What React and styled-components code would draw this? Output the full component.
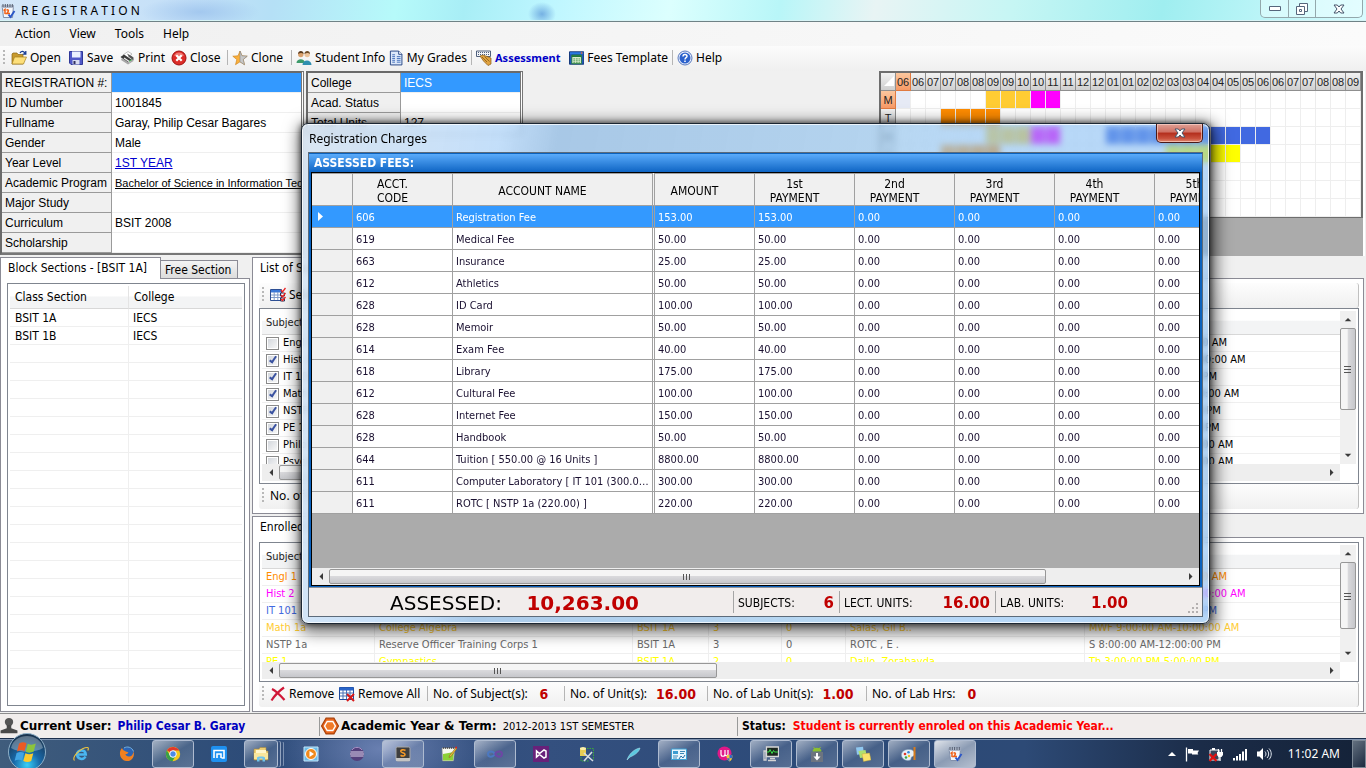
import React from "react";
import styled, { createGlobalStyle, css } from "styled-components";

const TAHOMA = `Tahoma, "DejaVu Sans Condensed", "DejaVu Sans", sans-serif`;
const SEGOE = `"Segoe UI", "Noto Sans", "Open Sans", sans-serif`;
const VERDANA = `Verdana, "DejaVu Sans", sans-serif`;
const ARIAL = `Arial, "Liberation Sans", sans-serif`;

const Global = createGlobalStyle`
  *, *::before, *::after { box-sizing: border-box; }
  body { margin: 0; background: #f0f0f0; color: #000; font-family: ${SEGOE}; font-size: 12px; }
  button { font: inherit; color: inherit; padding: 0; margin: 0; border: 0; background: none; }
  table { border-collapse: separate; border-spacing: 0; }
  th { font-weight: normal; text-align: left; }
`;

const Desktop = styled.div`
  position: relative;
  display: flex;
  flex-direction: column;
  height: 100vh;
  min-height: 680px;
  overflow: hidden;
`;

/* ---------- window title, menu, toolbar ---------- */

const TitleBar = styled.header`
  display: flex;
  flex: none;
  justify-content: space-between;
  height: 22px;
  padding-right: 3px;
  border-bottom: 1px solid #6f8286;
  box-shadow: inset 0 -1px 0 #d8f4f6;
  background:
    radial-gradient(ellipse 60px 16px at 200px 12px, rgba(150, 190, 235, 0.7), transparent),
    radial-gradient(ellipse 14px 12px at 542px 14px, rgba(100, 160, 220, 0.8), transparent),
    linear-gradient(100deg, #d4e6f8 0%, #c4e0f8 14%, #b5e0f6 20%, #b6fafa 29%, #a8eef6 34%, #bdf6ff 40%, #dcfffe 49%, #b8f6f8 57%, #e8f4f4 64%, #c6f6f4 74%, #9feef0 85%, #d8fcff 100%);
`;

const AppName = styled.h1`
  display: flex;
  align-items: center;
  gap: 5px;
  margin: 0;
  font-size: 12px;
  font-weight: normal;
  white-space: pre;
`;

const WindowButtons = styled.div`
  display: flex;
  height: 18px;
  border: 1px solid #93a8ac;
  border-top: 0;
  border-radius: 0 0 5px 5px;
  background: rgba(240, 255, 255, 0.5);
`;

const WindowButton = styled.button`
  display: flex;
  align-items: center;
  justify-content: center;
  width: ${(p) => (p.$wide ? 47 : 27)}px;
  & + & { border-left: 1px solid #93a8ac; }
`;

const MenuBar = styled.nav`
  display: flex;
  flex: none;
  align-items: center;
  gap: 19px;
  height: 24px;
  padding-left: 15px;
  background: linear-gradient(90deg, #f0f0f0, #fbfbfb);
`;

const MenuItem = styled.button`
  line-height: 20px;
`;

const Toolbar = styled.div`
  display: flex;
  flex: none;
  align-items: center;
  height: 25px;
  padding: 0 0 2px 3px;
  background: linear-gradient(#fcfcfc, #efefef);
`;

const Grip = styled.span`
  width: 2px;
  height: 16px;
  margin-right: 6px;
  background: repeating-linear-gradient(#b8b8b8 0 2px, transparent 2px 4px);
`;

const Divider = styled.span`
  width: 1px;
  height: ${(p) => p.$h || 15}px;
  margin: 0 ${(p) => p.$gap || 4}px;
  background: #b5b5b5;
`;

const ToolButton = styled.button`
  display: flex;
  align-items: center;
  gap: 3px;
  width: ${(p) => p.$w}px;
  white-space: nowrap;
  ${(p) => p.$active && css`color: #0000c8; font-weight: bold; font-size: 11px;`}
`;

/* ---------- student data ---------- */

const InfoArea = styled.section`
  display: flex;
  flex: none;
  align-items: flex-start;
  gap: 2px;
  height: 186px;
`;

const InfoTable = styled.table`
  flex: none;
  table-layout: fixed;
  width: ${(p) => p.$w}px;
  border: 2px solid #777;
  border-left-color: #6a6a6a;
  border-top-color: #6a6a6a;
  border-right: 3px double #777;
  background: #fff;
  font-family: ${ARIAL};
  font-size: 12px;
  th, td { height: 20px; padding: 0 3px; overflow: hidden; white-space: nowrap; line-height: 18px; }
  th { width: ${(p) => p.$label}px; background: #f0f0f0; border-right: 1px solid #9a9a9a; border-bottom: 1px solid #9a9a9a; }
  td { border-bottom: 1px solid #efefef; }
`;

const SelectedValue = styled.td`
  background: #3399ff;
  color: #fff;
`;

const InfoLink = styled.a`
  color: ${(p) => (p.$plain ? "#000" : "#0000d0")};
  font-size: ${(p) => (p.$plain ? 11 : 12)}px;
`;

const ScheduleBox = styled.div`
  flex: none;
  width: 486px;
  height: 185px;
  margin-left: auto;
  margin-right: 1px;
  border-right: 2px solid #fff;
  background: #ababab;
`;

const ScheduleTable = styled.table`
  table-layout: fixed;
  width: 484px;
  border: 2px solid #6e6e6e;
  border-bottom-width: 1px;
  background: #fff;
  font-family: ${ARIAL};
  font-size: 11px;
  th { height: 18px; padding: 0; text-align: center; white-space: nowrap; color: #222; background: linear-gradient(#f2f2f2, #cfcfcf); border-right: 1px solid #8f8f8f; border-bottom: 1px solid #8f8f8f; }
  td { height: 18px; padding: 0; border-right: 1px solid #eee; border-bottom: 1px solid #eee; }
`;

const MarkedHead = styled.th`
  && { background: linear-gradient(#fbc79e, #f79a66); border-color: #e07a40; }
`;

const Slot = styled.td`
  background: ${(p) => p.$color || "transparent"};
`;

/* ---------- panels ---------- */

const Main = styled.main`
  display: flex;
  flex: 1;
  gap: 2px;
  min-height: 0;
  padding-right: 2px;
`;

const SideColumn = styled.section`
  display: flex;
  flex: none;
  flex-direction: column;
  width: 250px;
`;

const WorkColumn = styled.div`
  display: flex;
  flex: 1;
  flex-direction: column;
  gap: 2px;
  min-width: 0;
`;

const TabbedPanel = styled.section`
  display: flex;
  flex-direction: column;
  flex: ${(p) => (p.$grow ? "1" : "0 0 257px")};
  min-height: 0;
`;

const Tabs = styled.div`
  display: flex;
  flex: none;
  align-items: flex-end;
  height: 21px;
`;

const Tab = styled.button`
  position: relative;
  z-index: 1;
  height: ${(p) => (p.$active ? 22 : 18)}px;
  margin-bottom: ${(p) => (p.$active ? -1 : 0)}px;
  width: ${(p) => p.$w}px;
  padding: 0 0 ${(p) => (p.$active ? 2 : 0)}px ${(p) => (p.$active ? 7 : 4)}px;
  border: 1px solid #8b8b95;
  border-bottom: 0;
  background: ${(p) => (p.$active ? "#fff" : "linear-gradient(#f4f4f4, #dcdcdc)")};
  text-align: left;
  white-space: nowrap;
  font-family: ${TAHOMA};
  font-size: 12px;
  & + & { border-left: 0; }
`;

const PanelBody = styled.div`
  display: flex;
  flex: 1;
  flex-direction: column;
  min-height: 0;
  padding: ${(p) => p.$pad || "4px 4px 5px 6px"};
  border: 1px solid #8b8b95;
  background: #fff;
`;

const ListBox = styled.div`
  display: flex;
  flex: 1;
  min-height: 0;
  padding: 2px;
  border: 1px solid #7f858f;
  background: #fff;
`;

const ListPane = styled.div`
  display: flex;
  flex: 1;
  flex-direction: column;
  min-width: 0;
`;

const ListClip = styled.div`
  flex: 1;
  min-height: 0;
  overflow: hidden;
  ${(p) => p.$ruled && css`
    background:
      linear-gradient(90deg, transparent 118px, #efefef 118px 119px, transparent 119px 232px, #efefef 232px 233px, transparent 233px),
      repeating-linear-gradient(transparent 0 17px, #efefef 17px 18px);
    background-position: 0 0, 0 23px;
  `}
`;

const SectionTable = styled.table`
  table-layout: fixed;
  width: 233px;
  font-family: ${TAHOMA};
  font-size: 12px;
  th { height: 23px; padding: 0 5px; border-bottom: 1px solid #d8d8d8; background: linear-gradient(#fff 45%, #f3f4f5 50%); }
  th + th { border-left: 1px solid #e4e4e4; }
  td { height: 18px; padding: 1px 5px 0; line-height: 17px; }
`;

const SubjectTable = styled.table`
  table-layout: fixed;
  width: 100%;
  font-family: ${TAHOMA};
  font-size: 11px;
  th { height: 24px; padding: 0 4px; border-bottom: 1px solid #d8d8d8; background: linear-gradient(#fff 40%, #f3f4f5 45%); color: #222; }
  td { height: 17px; padding: 0 4px; border-bottom: 1px solid #efefef; line-height: 16px; white-space: nowrap; }
  td + td { border-left: 1px solid #efefef; }
`;

const SubjectRow = styled.tr`
  color: ${(p) => p.$color || "#000"};
`;

const CheckLabel = styled.label`
  display: flex;
  align-items: center;
  gap: 4px;
`;

const Check = styled.input`
  appearance: none;
  position: relative;
  width: 13px;
  height: 13px;
  margin: 0;
  border: 1px solid #8a8a8a;
  background: linear-gradient(135deg, #d0d4da, #fafafa);
  box-shadow: inset 0 0 0 1px #fff;
  &:checked::before {
    content: "";
    position: absolute;
    left: 4px;
    top: 0;
    width: 4px;
    height: 8px;
    border: solid #3a52a0;
    border-width: 0 2px 2px 0;
    transform: rotate(35deg);
  }
`;

const PanelBar = styled.div`
  display: flex;
  align-items: center;
  height: 25px;
  flex: none;
  padding: 0 0 2px 3px;
  border-right: 1px solid #c0c0c0;
  border-radius: 3px;
  background: linear-gradient(#fdfdfd, #f0f0f0);
  white-space: nowrap;
`;

const Figure = styled.span`
  display: inline-block;
  width: ${(p) => p.$w}px;
  text-align: center;
  color: #c00000;
  font-family: ${TAHOMA};
  font-size: 14px;
  font-weight: bold;
`;

const BarText = styled.span`
  width: ${(p) => p.$w}px;
`;

/* ---------- scrollbars ---------- */

const HTrack = styled.div`
  display: flex;
  align-items: center;
  height: 17px;
  flex: none;
  background: #eee;
`;

const VTrack = styled.div`
  display: flex;
  flex-direction: column;
  align-items: center;
  width: 16px;
  flex: none;
  margin-bottom: 17px;
  background: #f0f0f0;
`;

const ArrowButton = styled.button`
  display: flex;
  flex: none;
  align-items: center;
  justify-content: center;
  width: 17px;
  height: 17px;
`;

const Rail = styled.div`
  flex: 1;
  min-height: 0;
  min-width: 0;
  align-self: stretch;
`;

const Thumb = styled.div`
  display: flex;
  align-items: center;
  justify-content: center;
  width: ${(p) => (p.$vertical ? "100%" : `${p.$size}%`)};
  height: ${(p) => (p.$vertical ? `${p.$size}%` : "15px")};
  margin: ${(p) => (p.$vertical ? "0" : "1px 0")};
  border: 1px solid #979797;
  border-radius: 2px;
  background: linear-gradient(${(p) => (p.$vertical ? "90deg" : "180deg")}, #f5f5f5 0 45%, #d9d9dc 50%, #c6c7cb);
  color: #444;
`;

const Chevron = ({ turn }) => (
  <svg width="4" height="7" viewBox="0 0 4 7" style={{ rotate: `${turn}deg` }} aria-hidden="true">
    <path d="M4 0v7L.5 3.500z" fill="#3a3a3a" />
  </svg>
);

const GripMarks = ({ vertical }) => (
  <svg width="8" height="8" viewBox="0 0 8 8" stroke="#555" aria-hidden="true">
    {vertical ? <path d="M0 1.500h7M0 4.500h7M0 7.500h7" /> : <path d="M.5 1v6M3.500 1v6M6.500 1v6" />}
  </svg>
);

const HScroll = ({ size }) => (
  <HTrack>
    <ArrowButton aria-label="Scroll left"><Chevron turn={0} /></ArrowButton>
    <Rail><Thumb $size={size}><GripMarks /></Thumb></Rail>
    <ArrowButton aria-label="Scroll right"><Chevron turn={180} /></ArrowButton>
  </HTrack>
);

const VScroll = ({ size }) => (
  <VTrack>
    <ArrowButton aria-label="Scroll up"><Chevron turn={90} /></ArrowButton>
    <Rail><Thumb $vertical $size={size}><GripMarks vertical /></Thumb></Rail>
    <ArrowButton aria-label="Scroll down"><Chevron turn={270} /></ArrowButton>
  </VTrack>
);

/* ---------- charges dialog ---------- */

const Dialog = styled.section`
  position: absolute;
  z-index: 5;
  top: 123px;
  left: 301px;
  right: 156px;
  padding: 0 6px 6px;
  border: 1px solid #1c2733;
  border-radius: 7px;
  background: linear-gradient(100deg, rgba(214, 228, 242, 0.85) 0, rgba(190, 220, 250, 0.9) 20%, rgba(150, 190, 228, 0.8) 26%, rgba(160, 202, 238, 0.75) 60%, rgba(125, 184, 242, 0.55) 75%);
  backdrop-filter: blur(3px);
  box-shadow: inset 0 0 0 1px rgba(255, 255, 255, 0.75), 0 0 6px rgba(0, 0, 0, 0.7), 2px 4px 16px 4px rgba(0, 0, 0, 0.6);
`;

const DialogTitle = styled.header`
  display: flex;
  align-items: center;
  justify-content: space-between;
  height: 28px;
`;

const DialogName = styled.h2`
  margin: 0;
  font-size: 12px;
  font-weight: normal;
  padding-left: 1px;
`;

const DialogClose = styled.button`
  display: flex;
  align-items: center;
  justify-content: center;
  align-self: flex-start;
  width: 47px;
  height: 19px;
  border: 1px solid #4a1a18;
  border-top: 0;
  border-radius: 0 0 5px 5px;
  background: linear-gradient(#dfa196 0, #cf6f62 45%, #b32d1c 50%, #c9503c 80%, #e08a72);
  box-shadow: inset 0 0 0 1px rgba(255, 220, 210, 0.6);
`;

const DialogBody = styled.div`
  border: 1px solid #5d6b7a;
  background: #f0ecec;
`;

const FeesPanel = styled.div`
  padding: 1px 2px;
  background: #0b62bd;
`;

const FeesCaption = styled.h3`
  height: 18px;
  margin: 0 -2px;
  padding-left: 5px;
  background: linear-gradient(#5aabfb, #0f65c4);
  color: #fff;
  font-family: ${TAHOMA};
  font-size: 12px;
  font-weight: bold;
  line-height: 19px;
`;

const FeesGrid = styled.div`
  border: 1px solid #000;
  background: #ababab;
`;

const FeesClip = styled.div`
  height: 395px;
  overflow: hidden;
`;

const FeesTable = styled.table`
  table-layout: fixed;
  width: 1043px;
  font-family: ${TAHOMA};
  font-size: 11px;
  th { height: 33px; padding: 3px 0 0; border-right: 1px solid #a0a0a0; border-bottom: 1px solid #a0a0a0; background: #f0f0f0; text-align: center; font-size: 12px; line-height: 14px; box-shadow: inset 0 1px 0 #a0a0a0; }
  td { height: 22px; padding: 1px 3px 0; border-right: 1px solid #a0a0a0; border-bottom: 1px solid #a0a0a0; background: #fff; color: #1a1030; overflow: hidden; text-overflow: ellipsis; white-space: nowrap; }
  th:first-child, td:first-child { background: #f0f0f0; }
  th:nth-child(3), td:nth-child(3) { border-right: 3px double #a0a0a0; }
`;

const FeeRow = styled.tr`
  ${(p) => p.$selected && css`
    && td { background: #3399ff; color: #fff; }
  `}
`;

const HeadText = styled.span`
  display: block;
  padding-right: 20px;
`;

const Totals = styled.footer`
  display: flex;
  align-items: center;
  height: 29px;
  border-top: 1px solid #8d9299;
  background: #f1edec;
  font-family: ${TAHOMA};
  font-size: 12px;
`;

const Total = styled.div`
  display: flex;
  flex: none;
  align-items: center;
  justify-content: space-between;
  width: ${(p) => p.$w}px;
  height: 22px;
  padding: 1px ${(p) => p.$end || 5}px 0 ${(p) => p.$start || 4}px;
  border-right: ${(p) => (p.$last ? 0 : "1px solid #a5a5a5")};
  white-space: nowrap;
  font-size: ${(p) => (p.$large ? 20 : 12)}px;
  font-family: ${(p) => (p.$large ? VERDANA : TAHOMA)};
`;

const Amount = styled.strong`
  color: #c00000;
  font-family: ${VERDANA};
  font-size: ${(p) => (p.$large ? 20 : 15)}px;
`;

const SizeGrip = styled.svg`
  align-self: flex-end;
  margin: 0 3px 2px auto;
`;

/* ---------- status bar and taskbar ---------- */

const StatusBar = styled.footer`
  display: flex;
  flex: none;
  align-items: center;
  height: 25px;
  margin-top: 1px;
  border-top: 1px solid #8d8d8d;
  background: #f1edec;
  font-family: ${VERDANA};
  font-size: 12px;
`;

const StatusCell = styled.div`
  display: flex;
  align-items: center;
  width: ${(p) => (p.$w ? `${p.$w}px` : "auto")};
  height: 19px;
  gap: 2px;
  padding-left: ${(p) => p.$start || 0}px;
  white-space: nowrap;
  & + & { border-left: 1px solid #999; }
`;

const StatusLabel = styled.b`
  font-family: ${(p) => (p.$tight ? TAHOMA : VERDANA)};
  margin-right: ${(p) => (p.$tight ? 5 : 4)}px;
`;

const StatusValue = styled.span`
  color: ${(p) => p.$color};
  font-family: ${TAHOMA};
  font-size: ${(p) => (p.$bold ? 12 : 11)}px;
  font-weight: ${(p) => (p.$bold ? "bold" : "normal")};
`;

const Taskbar = styled.nav`
  position: relative;
  display: flex;
  flex: none;
  align-items: center;
  height: 30px;
  padding-left: 58px;
  border-top: 1px solid #1c2f4c;
  box-shadow: inset 0 1px 0 #7f93b0;
  background:
    radial-gradient(ellipse 110px 60px at 380px 10px, rgba(120, 140, 190, 0.8), transparent),
    linear-gradient(90deg, #3f5c7c 0, #2b4a78 20%, #34507f 40%, #2c4a78 60%, #2d4a76 75%, #1b2c48 88%, #142238);
`;

const StartButton = styled.button`
  position: absolute;
  left: 7px;
  top: -7px;
  width: 40px;
  height: 37px;
  overflow: hidden;
`;

const TaskButton = styled.button`
  display: flex;
  flex: none;
  align-items: center;
  justify-content: center;
  width: ${(p) => (p.$stacked ? 34 : 42)}px;
  height: 28px;
  margin: 0 ${(p) => (p.$stacked ? 10 : 2)}px 0 2px;
  border-radius: 3px;
  ${(p) => p.$open && css`
    border: 1px solid #aebbd0;
    background: linear-gradient(150deg, rgba(255, 255, 255, 0.55), rgba(255, 255, 255, 0.12) 50%, rgba(255, 255, 255, 0.2));
  `}
  ${(p) => p.$front && css`
    background: linear-gradient(150deg, rgba(255, 255, 255, 0.85), rgba(255, 255, 255, 0.45) 50%, rgba(255, 255, 255, 0.65));
  `}
  ${(p) => p.$stacked && css`
    box-shadow: 3px 0 0 -1px #35507c, 4px 0 0 -1px #93a5c0, 7px 0 0 -2px #35507c, 8px 0 0 -2px #7d92b2;
  `}
`;

const Tray = styled.div`
  display: flex;
  align-items: center;
  gap: 8px;
  margin-left: auto;
  height: 28px;
  color: #fff;
`;

const Clock = styled.time`
  margin: 0 4px 0 8px;
  font-size: 12px;
`;

const ShowDesktop = styled.button`
  width: 14px;
  height: 28px;
  border: 1px solid #7b8794;
  background: linear-gradient(135deg, #63707f, #1c2a40);
`;

/* ---------- icons ---------- */

const Svg = ({ s = 16, box = 16, children }) => (
  <svg width={s} height={s} viewBox={`0 0 ${box} ${box}`} fill="none" aria-hidden="true">{children}</svg>
);

const art = {
  calendar: (
    <>
      <path d="M2 2.500h11.500l-1 12H3.500z" fill="#f4f6fb" stroke="#8290aa" />
      <path d="M2 2h11.500v3H2z" fill="#aeb8ca" />
      <path d="M3 1v3M5.300 1v3M7.600 1v3M10 1v3M12.300 1v3" stroke="#555e70" />
      <path d="M3.500 7.500l1.500-1V11M6.500 7.200c2.500-1.200 2.600 1 .2 3.300H10" stroke="#f06018" strokeWidth="1.500" />
      <path d="M8.500 11.500l2 2.500 4-6" stroke="#2a55c8" strokeWidth="1.900" />
    </>
  ),
  open: (
    <>
      <path d="M1 4l1-1h4l1 1.500h5V14H1z" fill="#c89a2c" stroke="#8a6616" strokeWidth=".7" />
      <path d="M3.500 7H15.500L12.500 14H1z" fill="#fddf7a" stroke="#a5801f" strokeWidth=".7" />
      <path d="M9 3c1.500-2.500 4-2 5 .5M14.800 1v3.200h-3" stroke="#173c94" strokeWidth="1.300" />
    </>
  ),
  save: (
    <>
      <path d="M1.500 1.500h13v13h-11.500l-1.500-1.500z" fill="#5058c8" stroke="#303898" />
      <path d="M4 1.500h8.500v6H4z" fill="#eaf0ff" />
      <path d="M4.500 10h7v4.500h-7z" fill="#d8dcf0" />
      <path d="M5.500 11h2v3h-2z" fill="#303060" />
    </>
  ),
  print: (
    <>
      <path d="M4 5l5-3.500 4 2.500-5 4z" fill="#fff" stroke="#999" strokeWidth=".6" />
      <path d="M1.500 7L5 4.500l8 5.500-3.500 3.500z" fill="#3a3a3a" />
      <path d="M2 10l7 4.500 5.500-3.500-1.500-2-4 3-6-4z" fill="#a8a8a8" />
      <path d="M8 3.500L12.500 6l2 1.500v3L10 7z" fill="#555" />
      <path d="M5 8l6 4" stroke="#eee" strokeWidth="1.300" />
      <path d="M10 11.500l3-2" stroke="#39b54a" strokeWidth=".8" />
    </>
  ),
  close: (
    <>
      <circle cx="8" cy="8" r="7" fill="#dc2c28" stroke="#a01010" />
      <path d="M3 5.500C5 1.500 11 1.500 13 5.500c-3 1.500-7 1.500-10 0z" fill="#f58c84" opacity=".8" />
      <path d="M5.300 5.300l5.400 5.400M10.700 5.300l-5.400 5.400" stroke="#fff" strokeWidth="2.200" />
    </>
  ),
  star: (
    <>
      <path d="M8 1l2 4.800 5.200.4-4 3.300 1.300 5.200L8 11.800l-4.500 2.900 1.300-5.200-4-3.300L6 5.800z" fill="#fbb03b" stroke="#c87d18" strokeWidth=".6" />
      <path d="M8 1l2 4.800 5.200.4-4 3.300 1.300 5.200L8 11.800z" fill="#c8c8c8" stroke="#888" strokeWidth=".6" />
    </>
  ),
  people: (
    <>
      <circle cx="4.800" cy="4.500" r="2.700" fill="#d9a06c" />
      <path d="M2 4c0-4 5.800-4 5.600 0-2-1.500-3.500-1-5.600 0z" fill="#5a3a1c" />
      <path d="M.5 13c0-5 8.500-5 8.500 0z" fill="#3e9b6b" />
      <circle cx="11.200" cy="4.500" r="2.700" fill="#ecc39a" />
      <path d="M8.400 4c0-4 5.800-4 5.600 0-2-1.500-3.500-1-5.600 0z" fill="#6e4a24" />
      <path d="M6.500 15c0-6 9-6 9 0z" fill="#2f8fb0" />
    </>
  ),
  grades: (
    <>
      <path d="M1.500 .5h9l3.500 3.500v11.500h-12.500z" fill="#dce8fa" stroke="#1e3f80" />
      <path d="M10.500.5V4H14" stroke="#1e3f80" fill="#fff" />
      <path d="M3.500 4.500h3M3.500 6.500h3M3.500 8.500h3M3.500 10.500h3M3.500 12.500h3M8.500 6.500h4M8.500 8.500h4M8.500 10.500h4M8.500 12.500h4" stroke="#3f6bb8" />
    </>
  ),
  assess: (
    <>
      <path d="M.5 1h14v5.500H.5z" fill="#f2f4f8" stroke="#50607c" />
      <path d="M2 2.500h11M2 4.500h11" stroke="#50607c" strokeDasharray="1 1" />
      <path d="M4 6l3-1 8 3v6l-3 1.500L7.500 11z" fill="#e0a340" stroke="#8a5a14" strokeWidth=".7" />
      <path d="M6 7l5 5M8.500 6.500l5 5" stroke="#8a5a14" strokeWidth=".8" />
    </>
  ),
  fees: (
    <>
      <path d="M.5 1.500h15v13H.5z" fill="#1f58b8" stroke="#0e3276" />
      <path d="M1 2h14v2H1z" fill="#2a7ae0" />
      <path d="M12.500 2h1.500v1.500h-1.500z" fill="#f26030" />
      <path d="M3 5h10v9H3z" fill="#e6f4d8" stroke="#21793a" />
      <path d="M3 5h10v2H3z" fill="#21793a" />
      <path d="M4.500 9h7M4.500 11h7M4.500 13h7" stroke="#3c8f46" strokeDasharray="2 .7" />
    </>
  ),
  help: (
    <>
      <circle cx="8" cy="8" r="7" fill="#e8eefb" stroke="#5c7cc0" />
      <circle cx="8" cy="8" r="5.500" fill="#2c62cc" />
      <path d="M6 6.500c0-3 4-2.500 4-.3C10 7.800 8 7.600 8 9.500M8 10.500V12" stroke="#fff" strokeWidth="1.500" />
    </>
  ),
  tableCheck: (
    <>
      <path d="M.5 2.500h11v11H.5z" fill="#fff" stroke="#2d4f94" />
      <path d="M1 3h10v2.500H1z" fill="#3a78d8" />
      <path d="M1 8h10M1 10.500h10M4.200 5v8M7.800 5v8" stroke="#7f9ac8" />
      <path d="M10.500 6h4v3h-4zM10.500 11h4v3h-4z" fill="#fff" stroke="#26345c" />
      <path d="M11 3l1.500 2 3-4M11 8l1.500 2 3-4M11 12l1.500 1.500 3-3.500" stroke="#e22" strokeWidth="1.300" />
    </>
  ),
  remove: <path d="M2 3c4 2 8 6 12.500 11M14 1.500C9 5 5 9 1.500 14.500" stroke="#d01838" strokeWidth="2.200" />,
  tableRemove: (
    <>
      <path d="M.5 1.500h14v12H.5z" fill="#fff" stroke="#1c489c" />
      <path d="M.5 1.500h14v3H.5z" fill="#2864c8" />
      <path d="M1 7h13M1 10h13M4 4v9M7.500 4v9M11 4v9" stroke="#4870b4" />
      <path d="M8 8l7 7M15 8l-7 7" stroke="#d81818" strokeWidth="2" />
    </>
  ),
  user: (
    <>
      <circle cx="8" cy="4.500" r="3.700" fill="#555" />
      <path d="M6 7h4v3l5.500 2v2.500H.5V12L6 10z" fill="#4a4a4a" />
    </>
  ),
  hexagon: (
    <>
      <path d="M4.500 1h7L15.500 8l-4 7h-7L.5 8z" fill="#e8641c" stroke="#a84008" />
      <path d="M5.500 4h5l2.300 4-2.300 4h-5L3.200 8z" fill="#f07a28" stroke="#fff" strokeWidth="1.300" />
    </>
  ),
  ie: (
    <>
      <path d="M12.500 10.500c-2 4-8.500 2.800-8.500-2.200s8.500-5.500 8.800.2H4.500" stroke="#4ab6f0" strokeWidth="2.500" />
      <path d="M1.500 14.500C-1.500 11 8 1.500 14.500 1.500c1.300 0 .8 2 .3 3" stroke="#f2c53c" strokeWidth="1.100" />
    </>
  ),
  firefox: (
    <>
      <circle cx="8" cy="8" r="6.800" fill="#2c64b4" />
      <path d="M3 2c-4 4-2 12.500 4.500 13 6 .5 8.500-5.500 7-9.500-.3 3-2 5-4.500 5-2 0-3.500-1-3.500-2.500 2 .5 2-1 3-1.500C8 5.500 7 6 6 5 4.500 4.500 3.500 3.500 3 2z" fill="#f08020" />
      <path d="M5 2c3-2 8-1 9.500 3.500" stroke="#74b4e8" />
    </>
  ),
  chrome: (
    <>
      <circle cx="8" cy="8" r="7.200" fill="#f4c81c" />
      <path d="M8 8L1.800 4.300C4.600-.3 11.800-.3 14.400 4.600H8z" fill="#e0382c" />
      <path d="M1.800 4.300C-.5 9 2 14.600 7.500 15.200L10.500 10 8 8 5 9.500z" fill="#38a048" />
      <circle cx="8" cy="8" r="3.300" fill="#4a8ae8" stroke="#fff" strokeWidth="1" />
    </>
  ),
  maxthon: (
    <>
      <rect width="16" height="16" rx="2" fill="#1e90f0" />
      <path d="M3 12V4.500h10V12h-2.500M6 12V8h4v4" stroke="#fff" strokeWidth="1.600" />
    </>
  ),
  folder: (
    <>
      <path d="M1 3h5l1-1.500h6V5h2v9H1z" fill="#edcf74" stroke="#a8883c" strokeWidth=".6" />
      <path d="M3 4h10v4H3z" fill="#fff6cc" />
      <path d="M1 7h14v6H1z" fill="#f9e69c" />
      <path d="M4 15.500v-4c0-1.500 8-1.500 8 0v4h-2.500v-3h-3v3z" fill="#6fc4ec" />
    </>
  ),
  player: (
    <>
      <path d="M1 1h14v14H1z" fill="#6cbce8" stroke="#c4e6fa" />
      <circle cx="8" cy="8" r="5.500" fill="#f08a1c" stroke="#fff" />
      <path d="M6.500 5l4.500 3-4.500 3z" fill="#fff" />
    </>
  ),
  eclipse: (
    <>
      <circle cx="8" cy="8" r="7" fill="#54407c" />
      <path d="M1.500 6h13M1 8h14M1.500 10h13" stroke="#ddd4ec" strokeWidth="1.100" />
      <path d="M3 4C5 .5 11 .5 13 4" stroke="#a894c8" />
    </>
  ),
  sublime: (
    <>
      <rect x="1" y="1" width="14" height="14" rx="1.500" fill="#3e3e3e" stroke="#a8a8a8" />
      <path d="M1 12h14v3H1z" fill="#c4c4c4" />
      <path d="M10.500 4.500C8 3 5.500 4 5.800 5.500 6 7 10 6.500 10 8.500c0 1.700-2.500 2-4.500.8" stroke="#f59a28" strokeWidth="1.600" />
    </>
  ),
  notepad: (
    <>
      <path d="M1 2h13l-1.500 13H1.500z" fill="#f6f8f0" stroke="#888" strokeWidth=".6" />
      <path d="M2 8l11-2-1 8.500H2z" fill="#8cd038" />
      <path d="M2 2h11" stroke="#444" strokeWidth="1.600" strokeDasharray="1 1" />
      <path d="M15 1.500L8.500 9.500 8 11.500l2-1 6-8z" fill="#e8b83c" stroke="#7a5a1a" strokeWidth=".5" />
      <path d="M14.500 1l1.500 1" stroke="#d22" strokeWidth="1.600" />
    </>
  ),
  infinity: (
    <>
      <path d="M8 8C6 4.500 1 4.500 1 8s5 3.500 7 0" stroke="#4c78c0" strokeWidth="2" />
      <path d="M8 8c2-3.500 7-3.500 7 0s-5 3.500-7 0" stroke="#6c48a4" strokeWidth="2" />
    </>
  ),
  studio: (
    <>
      <path d="M0 0h16v16H0z" fill="#68217a" />
      <path d="M3.500 5v6l3-2.600L11 12l2-1V5l-2-1-4.500 3.600z" stroke="#fff" strokeWidth="1.500" />
    </>
  ),
  tools: (
    <>
      <path d="M1 2h6v8H1z" fill="#e8cc54" />
      <ellipse cx="4" cy="2.500" rx="3" ry="1.500" fill="#fbf0a8" />
      <path d="M8 2.500h6.500V14M2 11v4h8" stroke="#3aa83a" strokeDasharray="1.500 1" />
      <path d="M5 7l9 8M13 6l-8 9" stroke="#d6dce4" strokeWidth="1.600" />
    </>
  ),
  feather: <path d="M2 14C4 8 9 3 15 2c-1 4-5 7-10 9z" fill="#5cc8e0" stroke="#b4ecf4" strokeWidth=".5" />,
  card: (
    <>
      <path d="M.5 3h15v10.500H.5z" fill="#e6f4fc" stroke="#3ca0d4" />
      <path d="M2 5h5v3H2z" fill="#3c9cd0" />
      <path d="M9 5.500h5M9 7.500h4M2 10h5M2 12h4" stroke="#3c88b8" />
      <path d="M8 13l2-3 2 2 2-3" stroke="#2470a8" />
    </>
  ),
  wamp: (
    <>
      <circle cx="7.500" cy="7.500" r="7" fill="#e01888" />
      <path d="M4 4v4c0 3 4 3 4 0V4v4c0 2.500 3 2 3 0V4" stroke="#fff" strokeWidth="1.200" />
      <path d="M9.500 9.500l3-1 3 1c0 3-1 5-3 6-2-1-3-3-3-6z" fill="#f4c838" />
      <path d="M12.500 8.500l3 1c0 1-.2 2-.5 2.800h-2.500zM12.500 12.300H10c.5 1.500 1.300 2.500 2.500 3.200z" fill="#3468c8" />
    </>
  ),
  monitor: (
    <>
      <path d="M3.500 1h12v9.500h-12z" fill="#1c2820" stroke="#d8d8d8" strokeWidth="1.300" />
      <path d="M4 6h2l1-2.500 2 4 1.500-3 1 1.500H15" stroke="#38e048" />
      <path d="M7 12.500h5M5 14.500h8M1 5h2v9H1z" stroke="#d4d4d4" strokeWidth="1.300" />
    </>
  ),
  android: (
    <>
      <path d="M3.500 5.500c0-5 9-5 9 0z" fill="#8cc030" />
      <path d="M4.500 1l1.500 2M11.500 1l-1.500 2" stroke="#8cc030" />
      <path d="M2 6h12v10H2z" fill="#6c7480" />
      <path d="M8 7v5" stroke="#fff" strokeWidth="2" />
      <path d="M4.500 10.500h7L8 14.500z" fill="#fff" />
    </>
  ),
  notes: (
    <>
      <path d="M1 1.500l7-.8 1 7-7 1z" fill="#90c8f0" />
      <path d="M3.500 5l7-1 1.500 7-7 1z" fill="#b0e070" />
      <path d="M7 8l7.500-1 1.500 7-7.500 1.500z" fill="#fbe36c" stroke="#c0a030" strokeWidth=".4" />
    </>
  ),
  paint: (
    <>
      <path d="M7 3.500c8-.5 8 6 4.500 7-2 .5-1 2-2 3.500-5 1.500-9-1.500-9-5s3-5.300 6.500-5.500z" fill="#e8f0f8" stroke="#88a4c0" strokeWidth=".6" />
      <circle cx="4" cy="8" r="1.300" fill="#e03828" />
      <circle cx="7.500" cy="6.200" r="1.300" fill="#3488d8" />
      <circle cx="5" cy="11.500" r="1.300" fill="#38a848" />
      <circle cx="8" cy="10" r="1.200" fill="#f0c020" />
      <path d="M13.500 1v13" stroke="#d87c1c" strokeWidth="2" />
    </>
  ),
  flag: (
    <>
      <path d="M2.500 1.500v14" stroke="#fff" strokeWidth="1.300" />
      <path d="M4 3h5v1.500h6L13.500 7l.8 1.500H8V7.500H4z" fill="#fff" />
    </>
  ),
  plug: (
    <>
      <path d="M2 4h9v10H2z" stroke="#fff" fill="#38445a" />
      <path d="M4 2h3v2H4zM9 6h6v3l-1.500 2h-3L9 9z" fill="#fff" />
      <path d="M10.500 3v3M13.500 3v3M12 11v4" stroke="#fff" strokeWidth="1.300" />
      <path d="M1.500 8l7 7M8.500 8l-7 7" stroke="#e01010" strokeWidth="2.300" />
    </>
  ),
  signal: <path d="M1 12h2v2.500H1zM4 10h2v4.500H4zM7 8h2v6.500H7zM10 5.500h2v9h-2zM13 3h2v11.500h-2z" fill="#fff" />,
  sound: (
    <>
      <path d="M1 5.500h2.500L7 2v12l-3.500-3.500H1z" fill="#fff" />
      <path d="M9 5.500c1.300 1.500 1.300 3.500 0 5M11 4c2.200 2.500 2.200 5.500 0 8M13 2.500c3 3.300 3 7.700 0 11" stroke="#dfe6ef" />
    </>
  ),
};

const Icon = ({ name, size }) => <Svg s={size}>{art[name]}</Svg>;

const CrossGlyph = () => (
  <svg width="12" height="10" viewBox="0 0 12 10" aria-hidden="true">
    <path d="M1 1h3.300L6 3l1.700-2H11L8 5l3 4H7.700L6 7 4.300 9H1l3-4z" fill="#fff" stroke="#44546a" />
  </svg>
);

const StartOrb = () => (
  <svg width="40" height="40" viewBox="0 0 40 40" aria-hidden="true">
    <defs>
      <radialGradient id="orb" cx=".5" cy=".85" r=".8">
        <stop offset="0" stopColor="#38d0f8" />
        <stop offset=".45" stopColor="#1868a8" />
        <stop offset="1" stopColor="#1a3450" />
      </radialGradient>
    </defs>
    <circle cx="20" cy="20" r="18.500" fill="url(#orb)" stroke="#8fb0c8" />
    <path d="M4 16C7 0 33 0 36 16c-8 5-24 5-32 0z" fill="#fff" opacity=".3" />
    <path d="M12 11.500c3-1.700 5.500-1.500 7.500-.3l-2 8c-2.300-1.200-4.500-1.300-7.500.2z" fill="#ec5a24" />
    <path d="M20.800 11.800c2.500 1.300 5 1.300 8-.2l-2.100 8c-2.800 1.400-5.300 1.400-7.900.1z" fill="#8cc43c" />
    <path d="M9.600 21c3-1.500 5.200-1.300 7.500-.2l-2 7.800c-2.500-1.200-4.800-1-7.500.2z" fill="#42a4e4" />
    <path d="M18.400 21.300c2.600 1.300 5.100 1.200 7.900-.1l-2.100 7.800c-2.600 1.500-5.200 1.200-7.900.1z" fill="#fcca2c" />
  </svg>
);

/* ---------- data ---------- */

const student = [
  ["ID Number", "1001845"],
  ["Fullname", "Garay, Philip Cesar Bagares"],
  ["Gender", "Male"],
  ["Year Level", <InfoLink key="y" href="#year">1ST YEAR</InfoLink>],
  ["Academic Program", <InfoLink key="p" $plain href="#program">Bachelor of Science in Information Technology</InfoLink>],
  ["Major Study", ""],
  ["Curriculum", "BSIT 2008"],
  ["Scholarship", ""],
];

const hours = "06 06 07 07 08 08 09 09 10 10 11 11 12 12 01 01 02 02 03 03 04 04 05 05 06 06 07 07 08 08 09".split(" ");
const GOLD = "#ffcc33", PINK = "#ff00ff", ORANGE = "#ff8c00", BLUE = "#4169e1", YELLOW = "#ffff00";
const week = [
  { day: "M", blocks: [[0, 0, "#e6eaf5"], [6, 8, GOLD], [9, 10, PINK]] },
  { day: "T", blocks: [[3, 6, ORANGE]] },
  { day: "W", blocks: [[6, 8, GOLD], [9, 10, PINK], [14, 24, BLUE]] },
  { day: "T", blocks: [[3, 6, ORANGE], [18, 22, YELLOW]] },
  { day: "F", blocks: [[6, 8, GOLD], [9, 10, PINK]] },
  { day: "S", blocks: [[4, 11, "#808080"]] },
  { day: "S", blocks: [] },
];

const offered = [
  ["Engl 1", false, "TTh 7:30:00 AM-9:30:00 AM"],
  ["Hist 2", true, "MWF 10:30:00 AM-11:30:00 AM"],
  ["IT 101", true, "W 1:00:00 PM-6:30:00 PM"],
  ["Math 1a", true, "MWF 9:00:00 AM-10:00:00 AM"],
  ["NSTP 1a", true, "S 8:00:00 AM-12:00:00 PM"],
  ["PE 1", true, "Th 3:00:00 PM-5:00:00 PM"],
  ["Philo 1", false, "TTh 9:00:00 AM-10:30:00 AM"],
  ["Psych 1", false, "TTh 9:00:00 AM-10:30:00 AM"],
];

const enrolled = [
  [ORANGE, "Engl 1", "Communication Arts 1", "BSIT 1A", "3", "0", "", "TTh 7:30:00 AM-9:30:00 AM"],
  [PINK, "Hist 2", "Philippine History", "BSIT 1A", "3", "0", "", "MWF 10:30:00 AM-11:30:00 AM"],
  [BLUE, "IT 101", "IT Fundamentals", "BSIT 1A", "2", "1", "", "W 1:00:00 PM-6:30:00 PM"],
  [GOLD, "Math 1a", "College Algebra", "BSIT 1A", "3", "0", "Salas, Gil B..", "MWF 9:00:00 AM-10:00:00 AM"],
  ["#696969", "NSTP 1a", "Reserve Officer Training Corps 1", "BSIT 1A", "3", "0", "ROTC , E .", "S 8:00:00 AM-12:00:00 PM"],
  [YELLOW, "PE 1", "Gymnastics", "BSIT 1A", "2", "0", "Dailo, Zorahayda", "Th 3:00:00 PM-5:00:00 PM"],
];

const fees = [
  ["606", "Registration Fee", "153.00"],
  ["619", "Medical Fee", "50.00"],
  ["663", "Insurance", "25.00"],
  ["612", "Athletics", "50.00"],
  ["628", "ID Card", "100.00"],
  ["628", "Memoir", "50.00"],
  ["614", "Exam Fee", "40.00"],
  ["618", "Library", "175.00"],
  ["612", "Cultural Fee", "100.00"],
  ["628", "Internet Fee", "150.00"],
  ["628", "Handbook", "50.00"],
  ["644", "Tuition [ 550.00 @ 16 Units ]", "8800.00"],
  ["611", "Computer Laboratory [ IT 101 (300.00) ]", "300.00"],
  ["611", "ROTC [ NSTP 1a (220.00) ]", "220.00"],
];
const payments = ["1st", "2nd", "3rd", "4th", "5th"];

const tasks = [
  ["ie"], ["firefox"], ["chrome", "open"], ["maxthon"], ["folder", "stack"], ["player"], ["eclipse"],
  ["sublime", "open"], ["notepad"], ["infinity", "open"], ["studio"], ["tools"], ["feather"], ["card", "open"],
  ["wamp"], ["monitor", "open"], ["android", "open"], ["notes", "open"], ["paint", "open"], ["calendar", "front"],
];

/* ---------- sections ---------- */

const Schedule = () => (
  <ScheduleBox>
    <ScheduleTable>
      <thead>
        <tr>
          <th><Svg s={13} box={13}><path d="M12 2v10H2z" fill="#fff" /></Svg></th>
          {hours.map((h, i) => (i === 0 ? <MarkedHead key={i}>{h}</MarkedHead> : <th key={i}>{h}</th>))}
        </tr>
      </thead>
      <tbody>
        {week.map(({ day, blocks }, r) => (
          <tr key={r}>
            {r === 0 ? <MarkedHead>{day}</MarkedHead> : <th>{day}</th>}
            {hours.map((_, i) => (
              <Slot key={i} $color={(blocks.find(([a, b]) => i >= a && i <= b) || [])[2]} />
            ))}
          </tr>
        ))}
      </tbody>
    </ScheduleTable>
  </ScheduleBox>
);

const subjectWidths = [112, 258, 76, 73, 64, 239];

const SubjectCols = () => (
  <colgroup>
    {subjectWidths.map((w, i) => <col key={i} width={w} />)}
    <col />
  </colgroup>
);

const SubjectHead = () => (
  <thead><tr><th>Subject</th><th /><th /><th /><th /><th /><th /></tr></thead>
);

const ChargesDialog = () => (
  <Dialog role="dialog" aria-labelledby="charges-title">
    <DialogTitle>
      <DialogName id="charges-title">Registration Charges</DialogName>
      <DialogClose aria-label="Close"><CrossGlyph /></DialogClose>
    </DialogTitle>
    <DialogBody>
      <FeesPanel>
        <FeesCaption>ASSESSED FEES:</FeesCaption>
        <FeesGrid>
          <FeesClip>
            <FeesTable>
              <colgroup>
                <col width="41" /><col width="100" /><col width="202" /><col width="100" />
                {payments.map((p) => <col key={p} width="100" />)}
                <col width="100" />
              </colgroup>
              <thead>
                <tr>
                  <th />
                  <th><HeadText>ACCT.<br />CODE</HeadText></th>
                  <th><HeadText>ACCOUNT NAME</HeadText></th>
                  <th><HeadText>AMOUNT</HeadText></th>
                  {payments.map((p) => <th key={p}><HeadText>{p}<br />PAYMENT</HeadText></th>)}
                  <th />
                </tr>
              </thead>
              <tbody>
                {fees.map(([code, name, amount], i) => (
                  <FeeRow key={i} $selected={i === 0}>
                    <td>{i === 0 && <svg width="9" height="9" viewBox="0 0 9 9" aria-hidden="true"><path d="M3 0l5 4.500L3 9z" fill="#fff" /></svg>}</td>
                    <td>{code}</td><td>{name}</td><td>{amount}</td><td>{amount}</td>
                    <td>0.00</td><td>0.00</td><td>0.00</td><td>0.00</td><td />
                  </FeeRow>
                ))}
              </tbody>
            </FeesTable>
          </FeesClip>
          <HScroll size={84} />
        </FeesGrid>
      </FeesPanel>
      <Totals>
        <Total $large $w={425} $start={81} $end={94}>ASSESSED: <Amount $large>10,263.00</Amount></Total>
        <Total $w={106}>SUBJECTS: <Amount>6</Amount></Total>
        <Total $w={156}>LECT. UNITS: <Amount>16.00</Amount></Total>
        <Total $w={137} $last>LAB. UNITS: <Amount>1.00</Amount></Total>
        <SizeGrip width="11" height="11" viewBox="0 0 11 11" fill="#b4b0b0" aria-hidden="true">
          <path d="M8 0h2v2H8zM4 4h2v2H4zM8 4h2v2H8zM0 8h2v2H0zM4 8h2v2H4zM8 8h2v2H8z" />
        </SizeGrip>
      </Totals>
    </DialogBody>
  </Dialog>
);

export default function App() {
  return (
    <Desktop>
      <Global />
      <TitleBar>
        <AppName><Icon name="calendar" />R E G I S T R A T I O N</AppName>
        <WindowButtons>
          <WindowButton aria-label="Minimize"><svg width="12" height="5" viewBox="0 0 12 5"><path d="M.5.5h11v4H.5z" fill="#fff" stroke="#56667c" /></svg></WindowButton>
          <WindowButton aria-label="Restore"><svg width="12" height="12" viewBox="0 0 12 12" fill="#fff" stroke="#56667c"><path d="M3.500.5h8v8h-8z" /><path d="M.5 3.500h8v8h-8zM3.500 6.500h2v2h-2z" /></svg></WindowButton>
          <WindowButton $wide aria-label="Close window"><CrossGlyph /></WindowButton>
        </WindowButtons>
      </TitleBar>
      <MenuBar>
        {["Action", "View", "Tools", "Help"].map((m) => <MenuItem key={m}>{m}</MenuItem>)}
      </MenuBar>
      <Toolbar>
        <Grip />
        <ToolButton $w={57}><Icon name="open" />Open</ToolButton>
        <ToolButton $w={51}><Icon name="save" />Save</ToolButton>
        <ToolButton $w={52}><Icon name="print" />Print</ToolButton>
        <ToolButton $w={52}><Icon name="close" />Close</ToolButton>
        <Divider />
        <ToolButton $w={55}><Icon name="star" />Clone</ToolButton>
        <Divider />
        <ToolButton $w={93}><Icon name="people" />Student Info</ToolButton>
        <ToolButton $w={78}><Icon name="grades" />My Grades</ToolButton>
        <Divider />
        <ToolButton $w={93} $active><Icon name="assess" />Assessment</ToolButton>
        <ToolButton $w={99}><Icon name="fees" />Fees Template</ToolButton>
        <Divider />
        <ToolButton $w={48}><Icon name="help" />Help</ToolButton>
      </Toolbar>

      <InfoArea>
        <InfoTable $w={304} $label={110}>
          <tbody>
            <tr><th>REGISTRATION #:</th><SelectedValue /></tr>
            {student.map(([k, v]) => <tr key={k}><th>{k}</th><td>{v}</td></tr>)}
          </tbody>
        </InfoTable>
        <InfoTable $w={217} $label={93}>
          <tbody>
            <tr><th>College</th><SelectedValue>IECS</SelectedValue></tr>
            <tr><th>Acad. Status</th><td /></tr>
            <tr><th>Total Units</th><td>127</td></tr>
          </tbody>
        </InfoTable>
        <Schedule />
      </InfoArea>

      <Main>
        <SideColumn>
          <Tabs>
            <Tab $active $w={161}>Block Sections - [BSIT 1A]</Tab>
            <Tab $w={77}>Free Section</Tab>
          </Tabs>
          <PanelBody>
            <ListBox>
              <ListClip $ruled>
                <SectionTable>
                  <colgroup><col width="118" /><col /></colgroup>
                  <thead><tr><th>Class Section</th><th>College</th></tr></thead>
                  <tbody>
                    <tr><td>BSIT 1A</td><td>IECS</td></tr>
                    <tr><td>BSIT 1B</td><td>IECS</td></tr>
                  </tbody>
                </SectionTable>
              </ListClip>
            </ListBox>
          </PanelBody>
        </SideColumn>
        <WorkColumn>
          <TabbedPanel>
            <Tabs><Tab $active $w={180}>List of Subjects Offered</Tab></Tabs>
            <PanelBody $pad="4px 4px 4px 6px">
              <PanelBar><Grip /><ToolButton $w={120}><Icon name="tableCheck" />Select Subjects</ToolButton></PanelBar>
              <ListBox>
                <ListPane>
                  <ListClip>
                    <SubjectTable>
                      <SubjectCols />
                      <SubjectHead />
                      <tbody>
                        {offered.map(([name, on, time]) => (
                          <SubjectRow key={name}>
                            <td><CheckLabel><Check type="checkbox" defaultChecked={on} />{name}</CheckLabel></td>
                            <td /><td /><td /><td /><td /><td>{time}</td>
                          </SubjectRow>
                        ))}
                      </tbody>
                    </SubjectTable>
                  </ListClip>
                  <HScroll size={42} />
                </ListPane>
                <VScroll size={69} />
              </ListBox>
              <PanelBar><Grip />No. of Subject(s):</PanelBar>
            </PanelBody>
          </TabbedPanel>
          <TabbedPanel $grow>
            <Tabs><Tab $active $w={180}>Enrolled Subjects</Tab></Tabs>
            <PanelBody $pad="4px 4px 4px 6px">
              <ListBox>
                <ListPane>
                  <ListClip>
                    <SubjectTable>
                      <SubjectCols />
                      <SubjectHead />
                      <tbody>
                        {enrolled.map(([color, ...cells]) => (
                          <SubjectRow key={cells[0]} $color={color}>
                            {cells.map((c, i) => <td key={i}>{c}</td>)}
                          </SubjectRow>
                        ))}
                      </tbody>
                    </SubjectTable>
                  </ListClip>
                  <HScroll size={42} />
                </ListPane>
                <VScroll size={81} />
              </ListBox>
              <PanelBar>
                <Grip />
                <ToolButton $w={69}><Icon name="remove" />Remove</ToolButton>
                <ToolButton $w={83}><Icon name="tableRemove" />Remove All</ToolButton>
                <Divider $gap={5} />
                <BarText $w={96}>No. of Subject(s):</BarText><Figure $w={30}>6</Figure>
                <Divider $gap={5} />
                <BarText $w={80}>No. of Unit(s):</BarText><Figure $w={52}>16.00</Figure>
                <Divider $gap={5} />
                <BarText $w={102}>No. of Lab Unit(s):</BarText><Figure $w={46}>1.00</Figure>
                <Divider $gap={5} />
                <BarText $w={84}>No. of Lab Hrs:</BarText><Figure $w={32}>0</Figure>
              </PanelBar>
            </PanelBody>
          </TabbedPanel>
        </WorkColumn>
      </Main>

      <StatusBar>
        <StatusCell $w={319}>
          <Icon name="user" size={18} />
          <StatusLabel>Current User:</StatusLabel>
          <StatusValue $bold $color="#0000c0">Philip Cesar B. Garay</StatusValue>
        </StatusCell>
        <StatusCell $w={418} $start={1}>
          <Icon name="hexagon" size={18} />
          <StatusLabel>Academic Year &amp; Term:</StatusLabel>
          <StatusValue>2012-2013 1ST SEMESTER</StatusValue>
        </StatusCell>
        <StatusCell $start={4}>
          <StatusLabel $tight>Status:</StatusLabel>
          <StatusValue $bold $color="#ff0000">Student is currently enroled on this Academic Year...</StatusValue>
        </StatusCell>
      </StatusBar>

      <Taskbar>
        <StartButton aria-label="Start"><StartOrb /></StartButton>
        {tasks.map(([name, state]) => (
          <TaskButton key={name} aria-label={name} $open={!!state} $front={state === "front"} $stacked={state === "stack"}>
            <Icon name={name} size={16} />
          </TaskButton>
        ))}
        <Tray>
          <svg width="8" height="4" viewBox="0 0 8 4" aria-hidden="true"><path d="M0 4l4-4 4 4z" fill="#fff" /></svg>
          <Icon name="flag" /><Icon name="plug" /><Icon name="signal" /><Icon name="sound" />
          <Clock>11:02 AM</Clock>
          <ShowDesktop aria-label="Show desktop" />
        </Tray>
      </Taskbar>

      <ChargesDialog />
    </Desktop>
  );
}
